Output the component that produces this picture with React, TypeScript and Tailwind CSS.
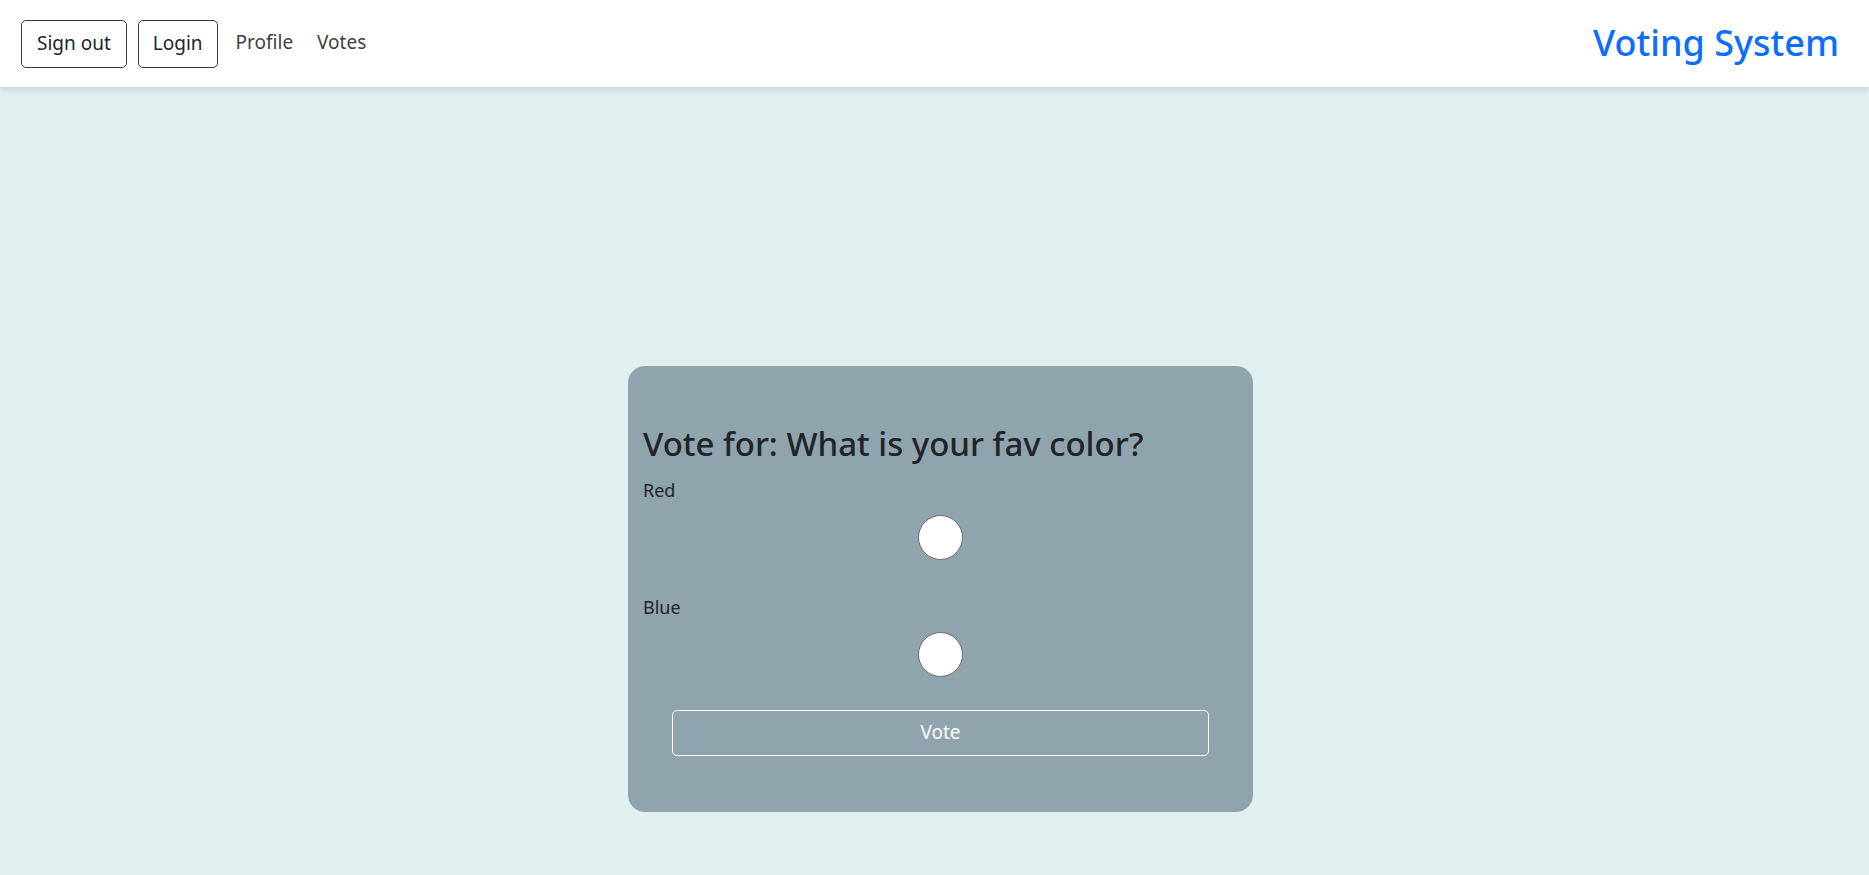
import { useState } from "react";

export default function App() {
  const [choice, setChoice] = useState("");

  const options = ["Red", "Blue"];

  return (
    <div
      className="min-h-screen bg-[#e0f0f0] text-[#212529]"
      style={{ fontFamily: '"Noto Sans", "Open Sans", Arial, sans-serif' }}
    >
      {/* Navbar */}
      <nav className="h-[87px] bg-white shadow-[0_3px_6px_rgba(0,0,0,0.12)] flex items-center justify-between pl-[21px] pr-[30px]">
        <div className="flex items-center">
          <button className="h-[48px] px-[15px] border border-[#343a40] rounded-[5px] text-[19px] text-[#212529] bg-white">
            Sign out
          </button>
          <button className="ml-[11px] h-[48px] px-[14px] border border-[#343a40] rounded-[5px] text-[19px] text-[#212529] bg-white">
            Login
          </button>
          <a className="ml-[18px] text-[19px] text-[#3f3f3f] -mt-[3px]">Profile</a>
          <a className="ml-[24px] text-[19px] text-[#3f3f3f] -mt-[3px]">Votes</a>
        </div>
        <div className="text-[36px] font-medium text-[#0d6efd] -mt-[2px]">Voting System</div>
      </nav>

      {/* Main */}
      <main className="flex justify-center pl-[12px] pt-[279px] pb-[63px]">
        <div className="w-[625px] bg-[#90a4ae] rounded-[17px] px-[15px] pt-[58px] pb-[56px]">
          <h3 className="text-[33px] font-medium leading-[1.2] mb-[12px]">
            Vote for: What is your fav color?
          </h3>
          {options.map((opt) => (
            <div key={opt} className="mb-[33px] last:mb-0">
              <div className="text-[18px] leading-[29px]">{opt}</div>
              <div className="flex justify-center mt-[10px]">
                <button
                  onClick={() => setChoice(opt)}
                  className="w-[45px] h-[45px] rounded-full bg-white border border-[#6b6b6b] flex items-center justify-center"
                >
                  {choice === opt && <span className="w-[22px] h-[22px] rounded-full bg-[#0d6efd]" />}
                </button>
              </div>
            </div>
          ))}
          <div className="px-[29px] mt-[31px]">
            <button className="w-full h-[46px] border border-white rounded-[5px] text-white text-[19px]">
              Vote
            </button>
          </div>
        </div>
      </main>
    </div>
  );
}
